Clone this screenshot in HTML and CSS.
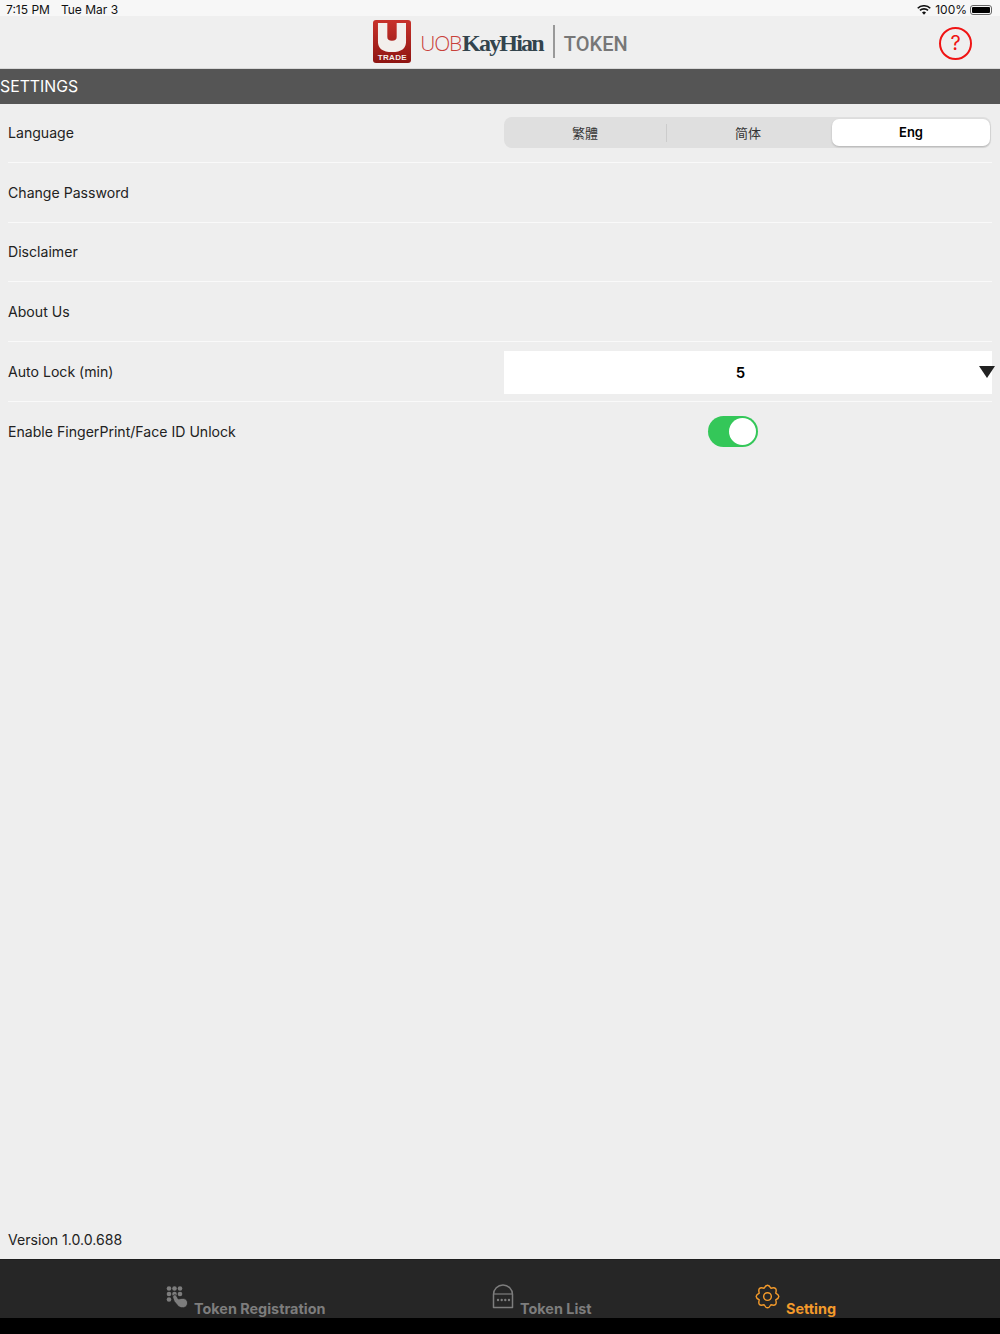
FILE: index.html
```html
<!DOCTYPE html>
<html lang="en">
<head>
  <meta charset="UTF-8"/>
  <title>UOB Kay Hian Token Settings</title>
  <link rel="stylesheet" href="styles.css">
</head>
<body>

  <!-- Status bar -->
  <div class="status-bar">
    <div class="status-left"><span>7:15 PM</span><span>Tue Mar 3</span></div>
    <div class="status-right">
      <svg class="wifi" width="14" height="10" viewBox="0 0 15 11">
        <path d="M7.5 10.6 5.3 8.3a3.1 3.1 0 0 1 4.4 0z" fill="#111"/>
        <path d="M3.7 6.7a5.4 5.4 0 0 1 7.6 0l1.3-1.400a7.3 7.3 0 0 0-10.200 0z" fill="#111"/>
        <path d="M1.200 4.200a9 9 0 0 1 12.600 0L15 3A10.800 10.800 0 0 0 0 3z" fill="#111"/>
      </svg>
      <span>100%</span>
      <div class="battery"><div class="battery-fill"></div></div>
    </div>
  </div>

  <!-- Header -->
  <div class="header">
    <div class="logo">
      <div class="logo-badge">
        <svg width="30" height="29" viewBox="0 0 30 31">
          <path d="M0 0H10V15Q10 19 15 19Q20 19 20 15V0H30V20Q30 31 15 31Q0 31 0 20Z" fill="#f3efec"/>
        </svg>
        <span class="logo-trade">TRADE</span>
      </div>
      <span class="logo-uob">UOB</span><span class="logo-kay">KayHian</span>
      <div class="logo-divider"></div>
      <span class="logo-token">TOKEN</span>
    </div>
    <div class="help">?</div>
  </div>

  <div class="title-bar">SETTINGS</div>

  <!-- Settings rows -->
  <div class="content">
    <div class="row">
      <span>Language</span>
      <div class="segments">
        <div class="segment">繁體</div>
        <div class="segment-line"></div>
        <div class="segment">简体</div>
        <div class="segment active">Eng</div>
      </div>
    </div>
    <div class="row"><span>Change Password</span></div>
    <div class="row"><span>Disclaimer</span></div>
    <div class="row"><span>About Us</span></div>
    <div class="row">
      <span>Auto Lock (min)</span>
      <div class="select">
        <span class="select-value">5</span>
        <div class="select-arrow"></div>
      </div>
    </div>
    <div class="row no-line">
      <span>Enable FingerPrint/Face ID Unlock</span>
      <div class="toggle-wrap"><div class="toggle"><div class="toggle-knob"></div></div></div>
    </div>
  </div>

  <div class="version">Version 1.0.0.688</div>

  <!-- Bottom tabs -->
  <div class="tab-bar">
    <div class="tab tab-reg">
      <svg width="22" height="22" viewBox="0 0 22 22">
        <g fill="#7d7d7d">
          <circle cx="3" cy="2.500" r="2.300"/><circle cx="8.500" cy="2.500" r="2.300"/><circle cx="14" cy="2.500" r="2.300"/>
          <circle cx="3" cy="8" r="2.300"/><circle cx="8.500" cy="8" r="2.300"/><circle cx="14" cy="8" r="2.300"/>
          <circle cx="3" cy="13.500" r="2.300"/>
          <path d="M8 9c1.200-.6 2 0 2.600 1l1.700 3 3.500-.6c2.700-.3 5.300 1.200 5.700 3.600.4 2.800-1 5.200-4 5.700-2.600.3-4.800-.5-6-2.400L8.300 15.500 6.900 12c-.4-1.100 0-2.400 1.100-3z" stroke="#262626" stroke-width="0.800"/>
        </g>
      </svg>
      <span>Token Registration</span>
    </div>
    <div class="tab tab-list">
      <svg width="22" height="25" viewBox="0 0 22 25">
        <path d="M1.500 23.500V10.500a9.500 9.500 0 0 1 19 0v13z" fill="none" stroke="#7d7d7d" stroke-width="1.500" stroke-linejoin="round"/>
        <path d="M1.500 10h19" stroke="#7d7d7d" stroke-width="1.200"/>
        <g fill="#7d7d7d"><circle cx="6" cy="16" r="1.200"/><circle cx="9.700" cy="16" r="1.200"/><circle cx="13.300" cy="16" r="1.200"/><circle cx="17" cy="16" r="1.200"/></g>
      </svg>
      <span>Token List</span>
    </div>
    <div class="tab tab-setting">
      <svg width="25" height="25" viewBox="0 0 26 26">
        <path d="M21.590 9.440Q28 13 21.590 16.560Q23.600 23.600 16.560 21.590Q13 28 9.440 21.590Q2.400 23.600 4.410 16.560Q-2 13 4.410 9.440Q2.400 2.400 9.440 4.410Q13 -2 16.560 4.410Q23.600 2.400 21.590 9.440Z" fill="none" stroke="#f39a2b" stroke-width="1.500" stroke-linejoin="round"/>
        <circle cx="13" cy="13" r="4" fill="none" stroke="#f39a2b" stroke-width="1.500"/>
      </svg>
      <span>Setting</span>
    </div>
  </div>
  <div class="home-strip"></div>

</body>
</html>
```

FILE: styles.css
```css
body {
  margin: 0;
  height: 1334px;
  display: flex;
  flex-direction: column;
  font-family: Inter, "Liberation Sans", "Noto Sans CJK TC", sans-serif;
  font-size: 14.100px;
  color: #222;
  background: #eeeeee;
  overflow: hidden;
}
/* Status bar */
.status-bar {
  height: 16px;
  background: #f7f7f7;
  display: flex;
  justify-content: space-between;
  align-items: center;
  padding: 3px 8px 0 6px;
  box-sizing: border-box;
  font-size: 12px;
  color: #111;
}
.status-left {
  display: flex;
  gap: 11px;
}
.status-right {
  display: flex;
  align-items: center;
  gap: 5px;
}
.wifi {
  margin-right: -1px;
}
.battery {
  width: 22px;
  height: 10px;
  border: 1px solid #666;
  border-radius: 3px;
  padding: 1px;
  box-sizing: border-box;
  margin-left: -2px;
}
.battery-fill {
  height: 100%;
  background: #000;
  border-radius: 1px;
}
/* Header */
.header {
  height: 53px;
  background: #efefef;
  position: relative;
  display: flex;
  justify-content: center;
  align-items: center;
  box-sizing: border-box;
  border-bottom: 1px solid #d8d8d8;
}
.logo {
  display: flex;
  align-items: center;
  margin-top: -1px;
  margin-left: 1px;
}
.logo-badge {
  width: 38px;
  height: 43px;
  background: linear-gradient(#c8322b, #8e1512);
  border-radius: 3px;
  display: flex;
  flex-direction: column;
  align-items: center;
  padding-top: 3px;
  box-sizing: border-box;
  margin-right: 9px;
  overflow: hidden;
}
.logo-trade {
  font-family: "Liberation Sans", sans-serif;
  font-size: 8px;
  font-weight: bold;
  color: #f3efec;
  line-height: 11px;
  letter-spacing: 0.3px;
}
.logo-badge svg {
  flex: none;
}
.logo-uob {
  font-family: "Open Sans", sans-serif;
  font-weight: 300;
  font-size: 21px;
  color: #c8403a;
  letter-spacing: -1.200px;
  margin-top: 3px;
  margin-right: 1px;
}
.logo-kay {
  font-family: "Liberation Serif", serif;
  font-weight: bold;
  font-size: 24px;
  color: #33444d;
  letter-spacing: -1.800px;
  margin-top: 3px;
}
.logo-divider {
  width: 2px;
  height: 33px;
  background: #999;
  margin: 0 9px 0 10px;
}
.logo-token {
  font-family: Roboto, sans-serif;
  font-weight: 500;
  font-size: 20px;
  color: #777;
  margin-top: 5px;
}
.help {
  position: absolute;
  left: 939px;
  top: 11px;
  width: 33px;
  height: 33px;
  border: 2px solid #f01414;
  border-radius: 50%;
  box-sizing: border-box;
  color: #f01414;
  font-size: 20px;
  line-height: 29px;
  text-align: center;
}
.title-bar {
  height: 35px;
  background: #555555;
  color: #fff;
  font-size: 15.800px;
  line-height: 35px;
}
/* Rows */
.content {
  flex: 1;
  margin-top: -1px;
  padding: 0 8px;
}
.row {
  height: 59.800px;
  display: flex;
  justify-content: space-between;
  align-items: center;
  box-sizing: border-box;
  border-bottom: 1px solid #f9f9f9;
}
.row.no-line {
  border-bottom: none;
}
.segments {
  width: 487px;
  height: 31px;
  margin-top: 1px;
  margin-right: 1px;
  background: #dfdfdf;
  border-radius: 8px;
  display: flex;
  align-items: center;
  padding: 2px 1px 2px 0;
  box-sizing: border-box;
  font-size: 13px;
}
.segment {
  width: 162px;
  text-align: center;
  color: #333;
}
.segment-line {
  width: 1px;
  height: 18px;
  background: #cccccc;
}
.segment.active {
  width: 158px;
  margin-left: auto;
  background: #fff;
  color: #000;
  font-weight: 600;
  height: 27px;
  line-height: 27px;
  border-radius: 7px;
  box-shadow: 0 1px 2px rgba(0,0,0,0.2);
}
.select {
  width: 488px;
  height: 43px;
  margin-top: 1px;
  background: #fff;
  position: relative;
  text-align: center;
  line-height: 43px;
  font-size: 15px;
  font-weight: 600;
  color: #000;
}
.select-value {
  display: block;
  padding-right: 15px;
}
.select-arrow {
  position: absolute;
  right: -3px;
  top: 15px;
  border-left: 8px solid transparent;
  border-right: 8px solid transparent;
  border-top: 12px solid #222;
}
.toggle-wrap {
  width: 488px;
  display: flex;
  padding-left: 204px;
  box-sizing: border-box;
}
.toggle {
  width: 50px;
  height: 31px;
  border-radius: 16px;
  background: #34c759;
  padding: 2px;
  box-sizing: border-box;
  display: flex;
  justify-content: flex-end;
}
.toggle-knob {
  width: 27px;
  height: 27px;
  border-radius: 50%;
  background: #fff;
}
.version {
  padding: 0 8px;
  height: 39px;
  line-height: 39px;
}
/* Tabs */
.tab-bar {
  height: 59px;
  background: #262626;
  border-top: 1px solid #1d1d1d;
  box-sizing: border-box;
  display: flex;
  font-size: 14.400px;
  font-weight: 700;
  color: #7d7d7d;
}
.tab {
  display: flex;
  align-items: flex-end;
  gap: 6px;
  line-height: 19px;
}
.tab svg {
  margin-bottom: 9px;
}
.tab-reg {
  width: 333px;
  padding-left: 166px;
  box-sizing: border-box;
}
.tab-reg svg {
  margin-bottom: 10px;
}
.tab-list {
  width: 333px;
  padding-left: 159px;
  box-sizing: border-box;
}
.tab-setting {
  width: 334px;
  padding-left: 89px;
  box-sizing: border-box;
  color: #f39a2b;
}
.home-strip {
  height: 16px;
  background: #000;
}
```
